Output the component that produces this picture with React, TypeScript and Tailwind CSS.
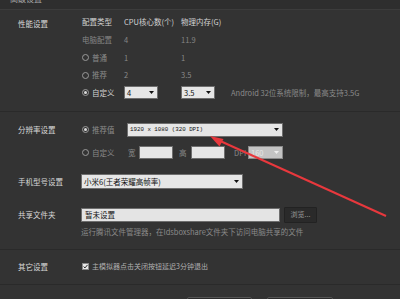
import React from "react";

const Radio = ({ checked }: { checked?: boolean }) => (
  <span className="w-[7px] h-[7px] rounded-full border border-[#9a9a9a] flex items-center justify-center shrink-0">
    {checked && <span className="w-[3px] h-[3px] rounded-full bg-[#dcdcdc]" />}
  </span>
);

const Arrow = ({ color = "#111" }: { color?: string }) => (
  <svg width="5" height="3" viewBox="0 0 5 3" className="shrink-0">
    <polygon points="0,0 5,0 2.5,3" fill={color} />
  </svg>
);

const Select = ({
  w,
  h = "h-[14px]",
  text,
  mono,
  disabled,
}: {
  w: string;
  h?: string;
  text: string;
  mono?: boolean;
  disabled?: boolean;
}) => (
  <div
    className={`${w} ${h} ${
      disabled ? "bg-[#c4c4c4] border-[#8a8a8a] text-[#e4e4e4]" : "bg-[#e6e6e6] border-[#6e6e6e] text-[#111]"
    } border flex items-center justify-between pl-[2px] pr-[3px] shrink-0`}
  >
    <span
      className={
        mono
          ? "font-['Liberation_Mono',monospace] text-[5.8px] leading-none"
          : "text-[7.5px] leading-none"
      }
    >
      {text}
    </span>
    <Arrow color={disabled ? "#eee" : "#111"} />
  </div>
);

const Label = ({ children }: { children: React.ReactNode }) => (
  <div className="w-[81px] pl-[18px] shrink-0 text-[#d8d8d8]">{children}</div>
);

export default function App() {
  return (
    <div className="relative w-[400px] h-[299px] overflow-hidden bg-[#333333] font-['Noto_Sans_CJK_SC','Noto_Sans',sans-serif] text-[7.5px] leading-none">
      {/* title bar */}
      <div className="h-[10px] bg-[#2e2e2e] border-b border-[#3c3c3c] overflow-hidden relative">
        <span className="absolute left-[10px] top-[-5px] text-[#a8a8a8] text-[8px]">高级设置</span>
      </div>

      {/* performance */}
      <div className="flex pt-[3px] pb-[9px] border-b border-[#2a2a2a]">
        <div className="w-[81px] pl-[18px] shrink-0 h-[17.75px] pt-[3px] flex items-center text-[#d8d8d8]">性能设置</div>
        <div className="pl-[1px] grid grid-cols-[42px_57px_50px_1fr] auto-rows-[17.75px] items-center flex-1">
          <span className="text-[#d4d4d4]">配置类型</span>
          <span className="text-[#d4d4d4]">CPU核心数(个)</span>
          <span className="text-[#d4d4d4]">物理内存(G)</span>
          <span />

          <span className="text-[#858585]">电脑配置</span>
          <span className="text-[#858585]">4</span>
          <span className="text-[#858585]">11.9</span>
          <span />

          <span className="flex items-center gap-[3px] text-[#8a8a8a]">
            <Radio />
            普通
          </span>
          <span className="text-[#8a8a8a]">1</span>
          <span className="text-[#8a8a8a]">1</span>
          <span />

          <span className="flex items-center gap-[3px] text-[#8a8a8a]">
            <Radio />
            推荐
          </span>
          <span className="text-[#8a8a8a]">2</span>
          <span className="text-[#8a8a8a]">3.5</span>
          <span />

          <span className="flex items-center gap-[3px] text-[#d4d4d4]">
            <Radio checked />
            自定义
          </span>
          <span>
            <Select w="w-[34px]" h="h-[13px]" text="4" />
          </span>
          <span>
            <Select w="w-[34px]" h="h-[13px]" text="3.5" />
          </span>
          <span className="text-[#8a8a8a] whitespace-nowrap text-[7.5px]">Android 32位系统限制，最高支持3.5G</span>
        </div>
      </div>

      {/* resolution */}
      <div className="flex flex-col">
        <div className="flex items-center mt-[11px] h-[14px]">
          <Label>分辨率设置</Label>
          <div className="flex items-center pl-[1px]">
            <span className="w-[45px] flex items-center gap-[3px] text-[#8a8a8a]">
              <Radio checked />
              推荐值
            </span>
            <Select w="w-[156px]" text="1920 x 1080 (320 DPI)" mono />
          </div>
        </div>

        <div className="flex items-center mt-[9px] h-[13px]">
          <div className="w-[81px] shrink-0" />
          <div className="flex items-center pl-[1px]">
            <span className="w-[45px] flex items-center gap-[3px] text-[#8a8a8a]">
              <Radio />
              自定义
            </span>
            <span className="ml-[1px] w-[11px] text-[#8a8a8a]">宽</span>
            <div className="w-[34px] h-[13px] bg-[#e6e6e6] border border-[#6e6e6e]" />
            <span className="ml-[6px] w-[12px] text-[#8a8a8a]">高</span>
            <div className="w-[34px] h-[13px] bg-[#e6e6e6] border border-[#6e6e6e]" />
            <span className="ml-[9px] w-[14px] text-[#8a8a8a]">DPI</span>
            <Select w="w-[35px]" h="h-[13px]" text="160" disabled />
          </div>
        </div>

        <div className="flex items-center mt-[15px] h-[15px]">
          <Label>手机型号设置</Label>
          <Select w="w-[162px]" h="h-[15px]" text="小米6(王者荣耀高帧率)" />
        </div>

        <div className="flex items-center mt-[18px] h-[16px]">
          <Label>共享文件夹</Label>
          <div className="w-[199px] h-[14px] bg-[#e4e4e4] border border-[#6e6e6e] flex items-center pl-[3px] text-[#111]">
            暂未设置
          </div>
          <div className="ml-[4px] w-[33px] h-[16px] bg-[#2a2a2a] border border-[#222] rounded-[1px] flex items-center justify-center text-[#9a9a9a] text-[7px]">
            浏览...
          </div>
        </div>

        <div className="flex items-center mt-[3px] h-[12px] mb-[11px]">
          <div className="w-[81px] shrink-0" />
          <span className="text-[#8a8a8a] whitespace-nowrap">运行腾讯文件管理器，在ldsboxshare文件夹下访问电脑共享的文件</span>
        </div>
      </div>

      {/* other */}
      <div className="border-t border-[#2a2a2a] border-b pb-[10px] pt-[10px]">
        <div className="flex items-center h-[14px]">
          <Label>其它设置</Label>
          <div className="flex items-center pl-[1px] gap-[3px]">
            <span className="w-[7px] h-[7px] bg-[#e8e8e8] border border-[#888] flex items-center justify-center">
              <svg width="5" height="5" viewBox="0 0 5 5">
                <path d="M0.6 2.6 L2 3.9 L4.5 0.9" stroke="#222" strokeWidth="1" fill="none" />
              </svg>
            </span>
            <span className="text-[#b0b0b0] whitespace-nowrap text-[7px]">主模拟器点击关闭按钮延迟3分钟退出</span>
          </div>
        </div>
      </div>

      {/* bottom buttons */}
      <div className="flex mt-[12px] pl-[187px] gap-[15px]">
        <div className="w-[65px] h-[18px] bg-[#2b2b2b] border border-[#555] rounded-[2px]" />
        <div className="w-[66px] h-[18px] bg-[#2b2b2b] border border-[#555] rounded-[2px]" />
      </div>

      {/* red annotation arrow */}
      <svg className="absolute inset-0 pointer-events-none" width="400" height="299" viewBox="0 0 400 299">
        <line x1="386" y1="216" x2="218" y2="140" stroke="#e8383d" strokeWidth="2" />
        <polygon points="210,136 223.5,139 219.5,146.5" fill="#e8383d" />
      </svg>
    </div>
  );
}
